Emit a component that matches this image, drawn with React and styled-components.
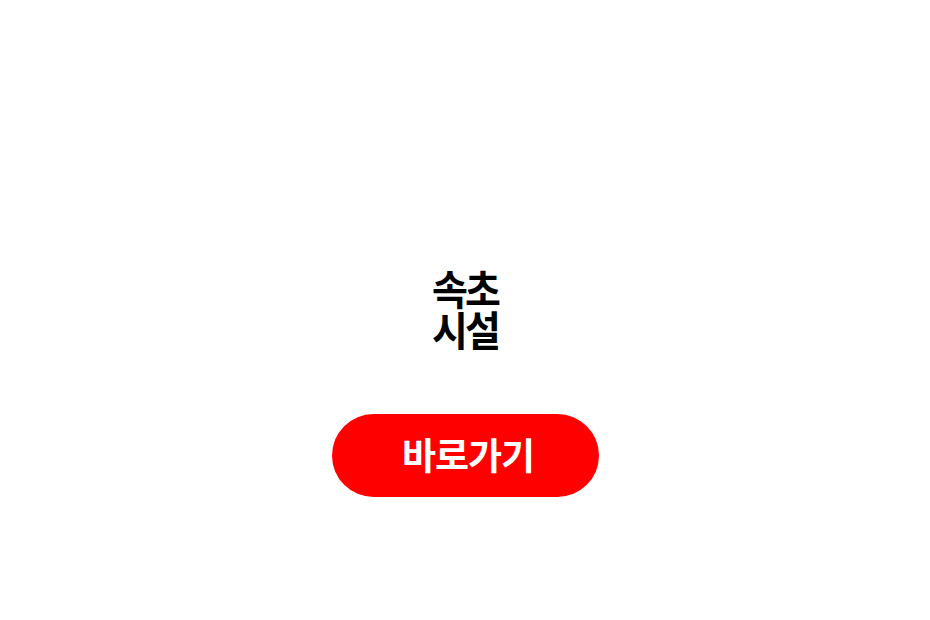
import React from "react";
import styled, { createGlobalStyle } from "styled-components";

const GlobalStyle = createGlobalStyle`
  html, body {
    margin: 0;
    padding: 0;
    background: #ffffff;
  }
  body {
    font-family: "Noto Sans CJK KR", "Noto Sans", sans-serif;
  }
`;

const Page = styled.div`
  width: 930px;
  height: 620px;
  display: flex;
  flex-direction: column;
  align-items: center;
  padding-top: 267px;
  box-sizing: border-box;
`;

const Title = styled.h1`
  margin: 0;
  display: flex;
  flex-direction: column;
  align-items: center;
  font-size: 39px;
  font-weight: 700;
  color: #000000;
  letter-spacing: -3px;
`;

const TitleLine = styled.span`
  display: block;
  height: 41px;
  line-height: 41px;
  transform: scaleY(1.05);
`;

const GoButton = styled.button`
  margin-top: 65px;
  width: 267px;
  height: 83px;
  border: none;
  border-radius: 42px;
  background: #fe0000;
  color: #ffffff;
  font-family: inherit;
  font-size: 37px;
  font-weight: 700;
  letter-spacing: -1px;
  cursor: pointer;
  display: flex;
  align-items: center;
  justify-content: center;
  padding: 0 0 4px 6px;
`;

export default function App() {
  return (
    <>
      <GlobalStyle />
      <Page>
        <Title>
          <TitleLine>속초</TitleLine>
          <TitleLine>시설</TitleLine>
        </Title>
        <GoButton>바로가기</GoButton>
      </Page>
    </>
  );
}
